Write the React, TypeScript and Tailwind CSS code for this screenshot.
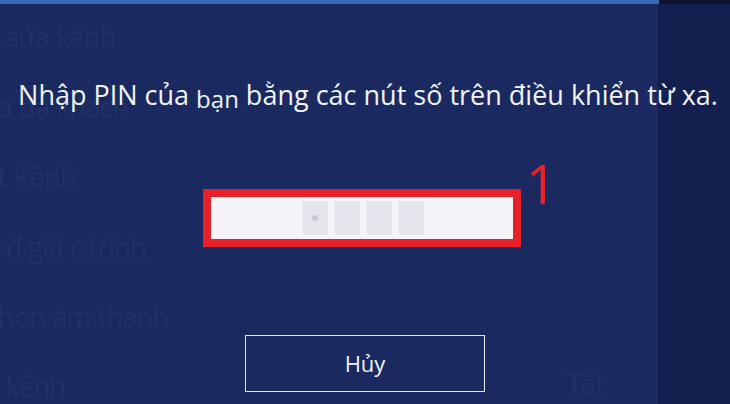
const menuItems = ["sửa kênh", "a đã khách", "t Kênh", "đ.giá c.trình", "hon âm thanh", "kênh"];

function PinSlot({ filled }: { filled?: boolean }) {
  return (
    <div className="w-[25px] h-[34px] bg-[#e4e4ea] flex items-center justify-center">
      {filled && <div className="w-[6px] h-[6px] rounded-full bg-[#c8c8d4]" />}
    </div>
  );
}

export default function App() {
  return (
    <div
      className="relative w-[730px] h-[404px] overflow-hidden bg-[#1a2a61] text-white"
      style={{ fontFamily: '"Open Sans", "Noto Sans", sans-serif' }}
    >
      {/* top bar of the settings screen */}
      <div className="flex h-[4px]">
        <div className="w-[659px] bg-[#3b67b3]" />
        <div className="flex-1 bg-[#0d1430]" />
      </div>

      {/* menu behind the dialog, dimmed */}
      <div className="absolute left-0 top-[18px] flex flex-col gap-[32px] text-[27px] leading-[38px] font-light text-[#24346a]">
        {menuItems.map((m, i) => (
          <div key={i} className={i === 0 || i === 3 || i === 5 ? "pl-[6px]" : "-ml-[2px]"}>
            {m}
          </div>
        ))}
      </div>
      <div className="absolute left-[567px] top-[365px] text-[27px] leading-[38px] font-light text-[#24346a]">Tắt</div>

      {/* darker strip on the right edge */}
      <div className="absolute right-0 top-[4px] bottom-0 w-[72px] bg-[#0a1235]/40" />

      {/* PIN dialog */}
      <div className="absolute inset-0 flex flex-col items-center pt-[77px]">
        <p className="text-[27px] leading-[36px] text-[#f2f4fa] whitespace-nowrap pl-[6px]">
          Nhập PIN của <span className="text-[24px] relative top-[3px]">bạn</span> bằng các nút số trên điều khiển từ xa.
        </p>

        <div className="flex items-start mt-[57px] ml-[30px]">
          <div className="mt-[18px] w-[318px] h-[58px] border-[8px] border-[#e8202a] bg-[#f5f5f9] flex items-center justify-center gap-[7px] pl-[2px]">
            <PinSlot filled />
            <PinSlot />
            <PinSlot />
            <PinSlot />
          </div>
          <div className="ml-[5px] -mt-[8px] text-[54px] leading-[40px] font-medium text-[#e8202a]">1</div>
        </div>

        <button className="mt-[88px] w-[240px] h-[57px] border-[1.5px] border-[#e6e9f2] text-[22px] text-[#f2f4fa] flex items-center justify-center">
          Hủy
        </button>
      </div>
    </div>
  );
}
